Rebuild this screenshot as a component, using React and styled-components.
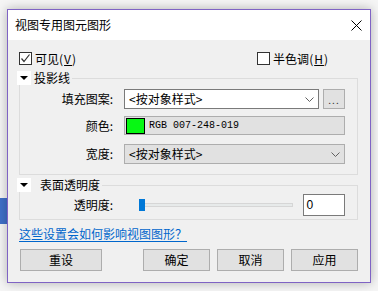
import React from "react";
import styled, { createGlobalStyle } from "styled-components";

const GlobalStyle = createGlobalStyle`
  html, body { margin: 0; padding: 0; }
  body {
    font-family: "Noto Sans CJK SC", "Noto Sans", sans-serif;
    font-size: 12px;
    color: #000;
  }
  * { box-sizing: border-box; }
`;

const Desktop = styled.div`
  position: relative;
  width: 378px;
  height: 291px;
  overflow: hidden;
  background: #f5f5f5;
  padding: 9px 0 0 7px;
`;

const BackWindowEdge = styled.div`
  position: absolute;
  left: 0;
  top: 198px;
  width: 7px;
  height: 26px;
  background: #4070c8;
`;

const Window = styled.div`
  position: relative;
  z-index: 1;
  width: 364px;
  height: 274px;
  border: 1px solid #7f63c4;
  background: #f0f0f0;
  box-shadow: 0 0 10px rgba(0, 0, 0, 0.28);
  display: flex;
  flex-direction: column;
`;

const TitleBar = styled.div`
  height: 30px;
  flex-shrink: 0;
  background: #fff;
  display: flex;
  align-items: center;
  justify-content: space-between;
  padding-left: 7px;
`;

const Title = styled.span`
  font-size: 12px;
  line-height: 14px;
`;

const CloseButton = styled.div`
  width: 28px;
  height: 30px;
  display: flex;
  align-items: center;
  justify-content: center;
`;

const Body = styled.div`
  flex: 1;
  display: flex;
  flex-direction: column;
  padding: 12px 12px 0 11px;
`;

const CheckRow = styled.div`
  height: 13px;
  display: flex;
  align-items: center;
  justify-content: space-between;
  padding-right: 29px;
`;

const CheckItem = styled.label`
  display: flex;
  align-items: center;
  gap: 3px;
  line-height: 14px;
`;

const Box = styled.span`
  width: 13px;
  height: 13px;
  border: 1px solid #333;
  background: #fff;
  display: flex;
  align-items: center;
  justify-content: center;
`;

const Mnemonic = styled.span`
  letter-spacing: 1px;
`;

const Group = styled.div`
  position: relative;
  margin-top: ${(p) => p.$mt}px;
  border: 1px solid #dcdcdc;
  padding: ${(p) => p.$pt}px 12px ${(p) => p.$pb}px 0;
  display: flex;
  flex-direction: column;
`;

const Legend = styled.div`
  position: absolute;
  top: -8px;
  left: -3px;
  display: flex;
  align-items: center;
`;

const ToggleBox = styled.span`
  width: 14px;
  height: 14px;
  background: #fff;
  display: flex;
  align-items: center;
  justify-content: center;
`;

const Triangle = styled.span`
  width: 0;
  height: 0;
  border-left: 4px solid transparent;
  border-right: 4px solid transparent;
  border-top: 4px solid #000;
`;

const LegendText = styled.span`
  background: #f0f0f0;
  padding-left: ${(p) => p.$pl}px;
  padding-right: 2px;
  line-height: 14px;
`;

const FormRow = styled.div`
  display: flex;
  align-items: center;
  height: ${(p) => p.$h}px;
  margin-top: ${(p) => p.$mt || 0}px;
`;

const Label = styled.span`
  width: 93px;
  flex-shrink: 0;
  text-align: right;
  margin-right: 11px;
  line-height: 14px;
`;

const Combo = styled.div`
  height: 100%;
  ${(p) => (p.$w ? `width: ${p.$w}px;` : "flex: 1;")}
  border: 1px solid ${(p) => (p.$disabled ? "#adadad" : "#7a7a7a")};
  background: ${(p) => (p.$disabled ? "#e1e1e1" : "#fff")};
  display: flex;
  align-items: center;
  justify-content: space-between;
  padding: 0 4px 0 4px;
  line-height: 14px;
`;

const SmallButton = styled.div`
  width: 22px;
  height: 100%;
  margin-left: 4px;
  border: 1px solid #adadad;
  background: #e1e1e1;
  display: flex;
  align-items: flex-end;
  justify-content: center;
  font-size: 10px;
  line-height: 12px;
  letter-spacing: 1px;
  padding-bottom: 2px;
  color: #333;
`;

const ColorField = styled.div`
  flex: 1;
  height: 100%;
  border: 1px solid #adadad;
  background: #e1e1e1;
  display: flex;
  align-items: center;
  padding-left: 1px;
`;

const Swatch = styled.span`
  width: 19px;
  height: 16px;
  border: 1px solid #000;
  background: ${(p) => p.$color};
`;

const ColorText = styled.span`
  margin-left: 4px;
  font-family: "Liberation Mono", monospace;
  font-size: 10px;
  line-height: 12px;
`;

const Slider = styled.div`
  position: relative;
  width: 156px;
  height: 12px;
  margin-left: 15px;
  display: flex;
  align-items: center;
`;

const Track = styled.div`
  width: 100%;
  height: 4px;
  background: #e7eaea;
  border: 1px solid #d6d6d6;
`;

const Thumb = styled.div`
  position: absolute;
  left: 0;
  top: 0;
  width: 6px;
  height: 12px;
  background: #0078d7;
`;

const NumberInput = styled.div`
  width: 42px;
  height: 100%;
  margin-left: 10px;
  border: 1px solid #7a7a7a;
  background: #fff;
  padding-left: 2px;
  display: flex;
  align-items: center;
  font-family: "Liberation Sans", sans-serif;
  font-size: 12px;
`;

const HelpLink = styled.a`
  margin-top: 6px;
  line-height: 16px;
  color: #0066cc;
  text-decoration: underline;
  text-underline-offset: 2px;
  align-self: flex-start;
  cursor: pointer;
`;

const ButtonRow = styled.div`
  margin-top: 7px;
  display: flex;
  align-items: center;
  gap: 7px;
  padding-left: 1px;
`;

const Spacer = styled.div`
  flex: 1;
`;

const Button = styled.div`
  width: ${(p) => p.$w}px;
  height: 22px;
  border: 1px solid #adadad;
  background: #e1e1e1;
  display: flex;
  align-items: center;
  justify-content: center;
  line-height: 14px;
`;

const Chevron = () => (
  <svg width="9" height="5" viewBox="0 0 9 5">
    <polyline points="0.5,0.5 4.5,4.5 8.5,0.5" fill="none" stroke="#606060" strokeWidth="1" />
  </svg>
);

const CheckMark = () => (
  <svg width="11" height="11" viewBox="0 0 11 11">
    <polyline points="1.5,5.5 4,8.5 9.5,1.5" fill="none" stroke="#333" strokeWidth="1.2" />
  </svg>
);

const CloseIcon = () => (
  <svg width="11" height="11" viewBox="0 0 11 11">
    <line x1="0.5" y1="0.5" x2="10.5" y2="10.5" stroke="#000" strokeWidth="1" />
    <line x1="10.5" y1="0.5" x2="0.5" y2="10.5" stroke="#000" strokeWidth="1" />
  </svg>
);

export default function App() {
  return (
    <>
      <GlobalStyle />
      <Desktop>
        <BackWindowEdge />
        <Window>
          <TitleBar>
            <Title>视图专用图元图形</Title>
            <CloseButton>
              <CloseIcon />
            </CloseButton>
          </TitleBar>
          <Body>
            <CheckRow>
              <CheckItem>
                <Box>
                  <CheckMark />
                </Box>
                <span>
                  可见<Mnemonic>(<u>V</u>)</Mnemonic>
                </span>
              </CheckItem>
              <CheckItem>
                <Box />
                <span>
                  半色调<Mnemonic>(<u>H</u>)</Mnemonic>
                </span>
              </CheckItem>
            </CheckRow>

            <Group $mt={13} $pt={10} $pb={10}>
              <Legend>
                <ToggleBox>
                  <Triangle />
                </ToggleBox>
                <LegendText $pl={3}>投影线</LegendText>
              </Legend>
              <FormRow $h={20}>
                <Label>填充图案:</Label>
                <Combo $w={195}>
                  <span>&lt;按对象样式&gt;</span>
                  <Chevron />
                </Combo>
                <SmallButton>...</SmallButton>
              </FormRow>
              <FormRow $h={19} $mt={7}>
                <Label>颜色:</Label>
                <ColorField>
                  <Swatch $color="#07f813" />
                  <ColorText>RGB 007-248-019</ColorText>
                </ColorField>
              </FormRow>
              <FormRow $h={20} $mt={9}>
                <Label>宽度:</Label>
                <Combo $disabled>
                  <span>&lt;按对象样式&gt;</span>
                  <Chevron />
                </Combo>
              </FormRow>
            </Group>

            <Group $mt={10} $pt={8} $pb={3}>
              <Legend>
                <ToggleBox>
                  <Triangle />
                </ToggleBox>
                <LegendText $pl={9}>表面透明度</LegendText>
              </Legend>
              <FormRow $h={22}>
                <Label>透明度:</Label>
                <Slider>
                  <Track />
                  <Thumb />
                </Slider>
                <NumberInput>0</NumberInput>
              </FormRow>
            </Group>

            <HelpLink>这些设置会如何影响视图图形？</HelpLink>

            <ButtonRow>
              <Button $w={82}>重设</Button>
              <Spacer />
              <Button $w={67}>确定</Button>
              <Button $w={67}>取消</Button>
              <Button $w={67}>应用</Button>
            </ButtonRow>
          </Body>
        </Window>
      </Desktop>
    </>
  );
}
